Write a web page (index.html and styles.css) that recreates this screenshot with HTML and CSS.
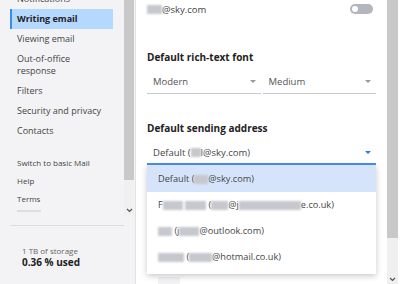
FILE: index.html
```html
<!DOCTYPE html>
<html lang="en">
<head>
    <meta charset="UTF-8">
    <title>Settings - Writing email</title>
    <link rel="stylesheet" href="styles.css">
</head>
<body>
    <div class="sidebar">
        <div class="sidebar-scroll">
            <ul class="nav-list">
                <li class="nav-item">Notifications</li>
                <li class="nav-item active">Writing email</li>
                <li class="nav-item">Viewing email</li>
                <li class="nav-item">Out-of-office<br>response</li>
                <li class="nav-item">Filters</li>
                <li class="nav-item">Security and privacy</li>
                <li class="nav-item">Contacts</li>
                <li class="nav-item small first-link">Switch to basic Mail</li>
                <li class="nav-item small">Help</li>
                <li class="nav-item small">Terms</li>
                <li class="nav-item small faded"></li>
            </ul>
            <div class="scrollbar narrow">
                <div class="thumb side-thumb"></div>
                <div class="track">
                    <svg width="7" height="5" viewBox="0 0 7 5"><path d="M1 1 L3.5 3.5 L6 1" fill="none" stroke="#555" stroke-width="1.2"/></svg>
                </div>
            </div>
        </div>
        <div class="storage">
            <div class="storage-label">1 TB of storage</div>
            <div class="storage-used">0.36 % used</div>
        </div>
    </div>

    <div class="main">
        <div class="content">
            <div class="toggle-row">
                <div class="address"><span class="blur" style="width:15px"></span>@sky.com</div>
                <div class="toggle"><div class="knob"></div></div>
            </div>

            <div class="section">
                <div class="section-title">Default rich-text font</div>
                <div class="select-row">
                    <div class="select">
                        <span>Modern</span>
                        <span class="caret"></span>
                    </div>
                    <div class="select">
                        <span>Medium</span>
                        <span class="caret"></span>
                    </div>
                </div>
            </div>

            <div class="section">
                <div class="section-title">Default sending address</div>
                <div class="select open">
                    <span>Default (<span class="blur" style="width:10px"></span>l@sky.com)</span>
                    <span class="caret blue"></span>
                    <ul class="dropdown">
                        <li class="option selected">Default (<span class="blur" style="width:14px"></span>@sky.com)</li>
                        <li class="option">F<span class="blur" style="width:20px"></span> <span class="blur" style="width:21px"></span> (<span class="blur" style="width:17px"></span>@j<span class="blur" style="width:62px"></span>e.co.uk)</li>
                        <li class="option"><span class="blur" style="width:14px"></span> (j<span class="blur" style="width:20px"></span>@outlook.com)</li>
                        <li class="option"><span class="blur" style="width:26px"></span> (<span class="blur" style="width:23px"></span>@hotmail.co.uk)</li>
                    </ul>
                </div>
            </div>

            <div class="below"></div>
        </div>
        <div class="scrollbar wide">
            <div class="thumb main-thumb"></div>
            <div class="track">
                <svg width="7" height="5" viewBox="0 0 7 5"><path d="M1 1 L3.5 3.5 L6 1" fill="none" stroke="#555" stroke-width="1.2"/></svg>
            </div>
        </div>
    </div>
</body>
</html>
```

FILE: styles.css
```css
body {
    margin: 0;
    padding: 0;
    width: 400px;
    height: 284px;
    overflow: hidden;
    display: flex;
    font-family: 'Open Sans', 'Noto Sans', sans-serif;
    color: #333;
    background-color: white;
}

/* left menu */
.sidebar {
    width: 135px;
    background-color: #f3f3f5;
    border-right: 1px solid #e2e2e4;
    display: flex;
    flex-direction: column;
}

.sidebar-scroll {
    height: 215px;
    display: flex;
    overflow: hidden;
}

.nav-list {
    list-style: none;
    margin: -11px 11px 0 10px;
    padding: 0;
    width: 103px;
}

.nav-item {
    font-size: 9px;
    line-height: 12px;
    padding: 4px 7px;
    color: #444;
    white-space: nowrap;
}

.nav-item.active {
    background-color: #b5d8ff;
    border-left: 2px solid #3a8ee6;
    padding-left: 5px;
    font-weight: bold;
    color: #222;
}

.nav-item.small {
    font-size: 8px;
    padding: 3px 7px;
}

.nav-item.first-link {
    margin-top: 13px;
}

.nav-item.faded {
    height: 2px;
    padding: 0;
    margin: 2px 0 0 7px;
    width: 24px;
    background-color: #dedee2;
}

.storage {
    margin: 10px 11px 0 10px;
    border-top: 1px solid #dddde0;
    padding: 19px 0 0 12px;
}

.storage-label {
    font-size: 8px;
    color: #666;
    line-height: 11px;
}

.storage-used {
    font-size: 10px;
    font-weight: bold;
    color: #222;
    line-height: 13px;
}

/* fake scrollbars */
.scrollbar {
    display: flex;
    flex-direction: column;
    flex-shrink: 0;
}

.scrollbar.narrow {
    width: 10px;
}

.scrollbar.wide {
    width: 11px;
    margin-right: 2px;
}

.thumb {
    background-color: #c8c8c8;
}

.side-thumb {
    height: 180px;
}

.main-thumb {
    height: 238px;
}

.track {
    flex: 1;
    background-color: #f0f0f0;
    display: flex;
    align-items: flex-end;
    justify-content: center;
    padding-bottom: 2px;
}

/* main settings */
.main {
    flex: 1;
    display: flex;
}

.content {
    flex: 1;
    padding: 0 11px 0 11px;
}

.toggle-row {
    display: flex;
    justify-content: space-between;
    align-items: center;
    height: 18px;
}

.address {
    font-size: 9.5px;
    color: #444;
    display: flex;
    align-items: center;
}

.toggle {
    width: 23px;
    height: 10px;
    border-radius: 5px;
    background-color: #b3b6bd;
    margin-right: 3px;
    display: flex;
    align-items: center;
    padding-left: 2px;
    box-sizing: border-box;
}

.knob {
    width: 6px;
    height: 6px;
    border-radius: 50%;
    background-color: white;
}

.section {
    margin-top: 32px;
}

.section + .section {
    margin-top: 27px;
}

.section-title {
    font-size: 10px;
    font-weight: bold;
    color: #222;
    line-height: 14px;
}

.select-row {
    display: flex;
    gap: 2px;
    margin-top: 6px;
}

.select {
    flex: 1;
    display: flex;
    justify-content: space-between;
    align-items: center;
    font-size: 9.5px;
    color: #555;
    height: 23px;
    padding: 0 5px 0 6px;
    border-bottom: 1px solid #c8c8cc;
    position: relative;
}

.select.open {
    margin-top: 6px;
    border-bottom: 2px solid #4d8ee8;
    height: 22px;
    color: #444;
}

.caret {
    width: 0;
    height: 0;
    border-left: 3px solid transparent;
    border-right: 3px solid transparent;
    border-top: 3px solid #999;
}

.caret.blue {
    border-top-color: #2b7be0;
}

.blur {
    display: inline-block;
    height: 9px;
    background-color: #c6c8ce;
    filter: blur(1px);
    vertical-align: middle;
}

.dropdown {
    position: absolute;
    top: 24px;
    left: 0;
    right: 0;
    margin: 0;
    padding: 0 0 4px 0;
    list-style: none;
    background-color: white;
    box-shadow: 0 2px 6px rgba(0, 0, 0, 0.22);
    z-index: 2;
}

.option {
    font-size: 9.2px;
    color: #444;
    height: 26px;
    line-height: 26px;
    padding-left: 11px;
}

.option.selected {
    background-color: #d5e4fa;
    height: 27px;
    line-height: 27px;
}

.below {
    margin-top: 112px;
    margin-left: 11px;
    width: 22px;
    height: 8px;
    background-color: #f2f2f4;
}
```
